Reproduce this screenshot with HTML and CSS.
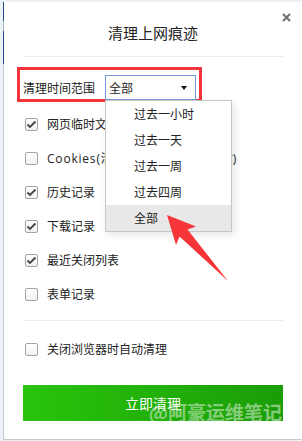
FILE: index.html
```html
<!DOCTYPE html>
<html lang="zh-CN">
<head>
<meta charset="utf-8">
<title>清理上网痕迹</title>
<link rel="stylesheet" href="styles.css">
</head>
<body>
<div class="dialog">
  <button class="close" aria-label="关闭">
    <svg width="9" height="9" viewBox="0 0 9 9"><path d="M1 1L8 8M8 1L1 8" stroke="#6e6e6e" stroke-width="2"/></svg>
  </button>
  <h1 class="title">清理上网痕迹</h1>
  <div class="sep"></div>

  <div class="range">
    <span class="range-label">清理时间范围</span>
    <div class="select">
      <span class="select-value">全部</span>
      <span class="caret"></span>
      <ul class="dropdown">
        <li>过去一小时</li>
        <li>过去一天</li>
        <li>过去一周</li>
        <li>过去四周</li>
        <li class="hover">全部</li>
      </ul>
    </div>
  </div>

  <ul class="options">
    <li class="opt"><span class="cb"><svg class="tick" width="11" height="11" viewBox="0 0 11 11"><path d="M1.5 5.5L4 8L9.5 2.5"/></svg></span>网页临时文件</li>
    <li class="opt"><span class="cb"></span><span class="latin">Cookies(</span>清除后需要重新登录网站)</li>
    <li class="opt"><span class="cb"><svg class="tick" width="11" height="11" viewBox="0 0 11 11"><path d="M1.5 5.5L4 8L9.5 2.5"/></svg></span>历史记录</li>
    <li class="opt"><span class="cb"><svg class="tick" width="11" height="11" viewBox="0 0 11 11"><path d="M1.5 5.5L4 8L9.5 2.5"/></svg></span>下载记录</li>
    <li class="opt"><span class="cb"><svg class="tick" width="11" height="11" viewBox="0 0 11 11"><path d="M1.5 5.5L4 8L9.5 2.5"/></svg></span>最近关闭列表</li>
    <li class="opt"><span class="cb"></span>表单记录</li>
  </ul>
  <div class="sep sep2"></div>
  <div class="opt auto"><span class="cb"></span>关闭浏览器时自动清理</div>

  <button class="go">立即清理<span class="mark">@阿豪运维笔记</span></button>
</div>

<svg class="arrow" width="302" height="441" viewBox="0 0 302 441">
  <polygon points="167,215 196,226.5 187.5,229.5 228,281 179.5,236.5 176,245" fill="#f7363a"/>
</svg>
</body>
</html>
```

FILE: styles.css
```css
html, body {
  margin: 0;
  padding: 0;
}
body {
  width: 302px;
  height: 441px;
  overflow: hidden;
  background: #edf1f6;
  font-family: "Open Sans", "Noto Sans CJK SC", sans-serif;
  color: #222;
  position: relative;
}
.dialog {
  margin: 2px 0 0 3px;
  box-sizing: border-box;
  width: 299px;
  background: #fff;
  border-left: 1px solid #1f4f8f;
  border-bottom: 1px solid #c9c9c9;
  border-image: linear-gradient(to bottom, #1f4f8f 0, #1f4f8f 20px, #a9b6c8 20px, #a9b6c8 30px, #1f4f8f 30px, #1f4f8f 63px, #c6cbd2 63px) 1;
  padding: 21px 19px 18px 19px;
  position: relative;
}
.close {
  position: absolute;
  top: 11px;
  right: 11px;
  width: 9px;
  height: 9px;
  padding: 0;
  margin: 0;
  border: 0;
  background: none;
  display: block;
}
.close svg { display: block; }
.title {
  margin: 0;
  font-size: 15px;
  line-height: 20px;
  font-weight: normal;
  text-align: center;
  color: #222;
  font-family: "Noto Sans CJK SC", sans-serif;
}
.sep {
  height: 1px;
  background: #ececec;
  margin-top: 13px;
}
.range {
  margin: 10px 0 0 -6px;
  box-sizing: border-box;
  width: 185px;
  height: 35px;
  border: 3px solid #f5353b;
  padding: 5px 0 0 3px;
  display: flex;
  align-items: flex-start;
}
.range-label {
  font-size: 12px;
  line-height: 25px;
  width: 72px;
  margin-right: 10px;
  white-space: nowrap;
  font-family: "Noto Sans CJK SC", sans-serif;
}
.select {
  position: relative;
  box-sizing: border-box;
  width: 91px;
  height: 25px;
  border: 1px solid #7399e0;
  display: flex;
  align-items: center;
  padding: 0 8px 0 3px;
  background: #fff;
}
.select-value {
  font-size: 12px;
  line-height: 23px;
  font-family: "Noto Sans CJK SC", sans-serif;
}
.caret {
  margin-left: auto;
  width: 0;
  height: 0;
  border-left: 3.5px solid transparent;
  border-right: 3.5px solid transparent;
  border-top: 4px solid #111;
  margin-top: 1px;
}
.dropdown {
  position: absolute;
  top: 24px;
  left: -1px;
  z-index: 2;
  box-sizing: border-box;
  width: 127px;
  margin: 0;
  padding: 0;
  list-style: none;
  background: #fff;
  border: 1px solid #c6c6c6;
  box-shadow: 3px 3px 8px rgba(0, 0, 0, 0.10);
}
.dropdown li {
  height: 26px;
  line-height: 26px;
  padding-left: 28px;
  font-size: 12px;
  font-family: "Noto Sans CJK SC", sans-serif;
  color: #222;
}
.dropdown li.hover {
  background: #e8e8e8;
}
.options {
  list-style: none;
  margin: 5px 0 0 0;
  padding: 0;
}
.opt {
  height: 34px;
  display: flex;
  align-items: center;
  font-size: 12px;
  white-space: nowrap;
  color: #222;
}
.latin {
  letter-spacing: 0.8px;
}
.cb {
  box-sizing: border-box;
  width: 13px;
  height: 13px;
  margin: 0 9px 0 2px;
  border: 1px solid #a3a3a3;
  border-radius: 2px;
  background: linear-gradient(#ffffff, #f2f2f2);
  flex: none;
  display: flex;
}
.tick {
  display: block;
}
.tick path {
  fill: none;
  stroke: #444;
  stroke-width: 1.8;
}
.sep2 {
  margin-top: 9px;
}
.auto {
  margin-top: 11px;
}
.go {
  position: relative;
  display: block;
  width: 100%;
  height: 36px;
  margin: 19px 0 0 0;
  padding: 0;
  border: 0;
  background: linear-gradient(to right, #29c40b, #1a9d07);
  color: #fff;
  font-size: 14px;
  font-family: "Noto Sans CJK SC", sans-serif;
  line-height: 36px;
  text-align: center;
}
.mark {
  position: absolute;
  right: 1px;
  top: 16px;
  font-size: 19px;
  line-height: 22px;
  font-weight: bold;
  color: rgba(235, 245, 235, 0.5);
  white-space: nowrap;
  font-family: "Noto Sans CJK SC", sans-serif;
}
.arrow {
  position: absolute;
  left: 0;
  top: 0;
  pointer-events: none;
  z-index: 5;
}
```
